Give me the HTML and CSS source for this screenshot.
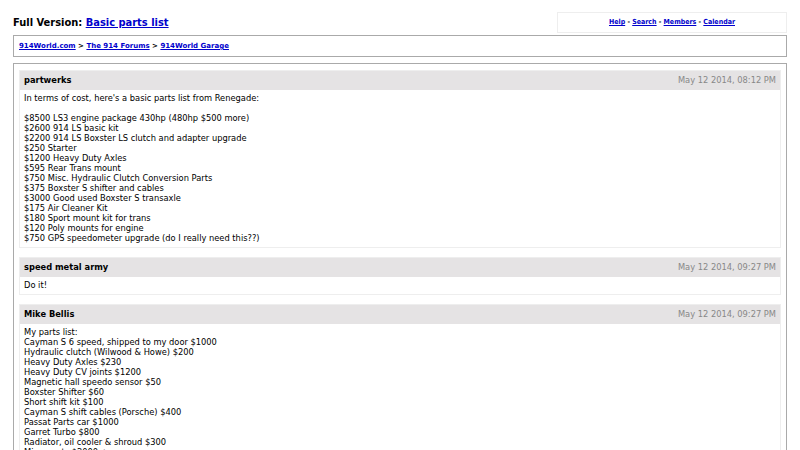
FILE: index.html
```html
<!DOCTYPE html>
<html lang="en">
<head>
    <meta charset="UTF-8">
    <title>Basic parts list - 914World Garage</title>
    <link rel="stylesheet" href="styles.css">
</head>
<body>
    <div class="top">
        <h1 class="title">Full Version: <a href="#">Basic parts list</a></h1>
        <div class="menu">
            <a href="#">Help</a> - <a href="#">Search</a> - <a href="#">Members</a> - <a href="#">Calendar</a>
        </div>
    </div>

    <div class="crumbs">
        <a href="#">914World.com</a> &gt; <a href="#">The 914 Forums</a> &gt; <a href="#">914World Garage</a>
    </div>

    <div class="thread">
        <div class="post">
            <div class="post-head">
                <span class="author">partwerks</span>
                <span class="date">May 12 2014, 08:12 PM</span>
            </div>
            <div class="post-body">In terms of cost, here's a basic parts list from Renegade:<br>
<br>
$8500 LS3 engine package 430hp (480hp $500 more)<br>
$2600 914 LS basic kit<br>
$2200 914 LS Boxster LS clutch and adapter upgrade<br>
$250 Starter<br>
$1200 Heavy Duty Axles<br>
$595 Rear Trans mount<br>
$750 Misc. Hydraulic Clutch Conversion Parts<br>
$375 Boxster S shifter and cables<br>
$3000 Good used Boxster S transaxle<br>
$175 Air Cleaner Kit<br>
$180 Sport mount kit for trans<br>
$120 Poly mounts for engine<br>
$750 GPS speedometer upgrade (do I really need this??)</div>
        </div>

        <div class="post">
            <div class="post-head">
                <span class="author">speed metal army</span>
                <span class="date">May 12 2014, 09:27 PM</span>
            </div>
            <div class="post-body">Do it!</div>
        </div>

        <div class="post">
            <div class="post-head">
                <span class="author">Mike Bellis</span>
                <span class="date">May 12 2014, 09:27 PM</span>
            </div>
            <div class="post-body">My parts list:<br>
Cayman S 6 speed, shipped to my door $1000<br>
Hydraulic clutch (Wilwood &amp; Howe) $200<br>
Heavy Duty Axles $230<br>
Heavy Duty CV joints $1200<br>
Magnetic hall speedo sensor $50<br>
Boxster Shifter $60<br>
Short shift kit $100<br>
Cayman S shift cables (Porsche) $400<br>
Passat Parts car $1000<br>
Garret Turbo $800<br>
Radiator, oil cooler &amp; shroud $300<br>
Misc. parts $2000 +</div>
        </div>
    </div>
</body>
</html>
```

FILE: styles.css
```css
body {
    margin: 0;
    padding: 12px 13px;
    font-family: "DejaVu Sans", Verdana, sans-serif;
    color: #000;
    background: #fff;
}

a {
    color: #0000cc;
}

.top {
    display: flex;
    justify-content: space-between;
    align-items: center;
}

.title {
    margin: 0;
    font-family: "DejaVu Sans Condensed", "DejaVu Sans", sans-serif;
    font-size: 11px;
    font-weight: bold;
}

.menu {
    width: 228px;
    height: 19px;
    line-height: 19px;
    border: 1px solid #eee;
    text-align: center;
    font-family: "DejaVu Sans Condensed", "DejaVu Sans", sans-serif;
    font-size: 7px;
    font-weight: bold;
}

.crumbs {
    margin-top: 2px;
    height: 20px;
    line-height: 20px;
    padding: 0 5px;
    border: 1px solid #aaa;
    font-size: 7px;
    font-weight: bold;
}

.thread {
    margin-top: 6px;
    padding: 6px 5px 5px;
    border: 1px solid #aaa;
    min-height: 400px;
}

.post {
    border: 1px solid #eee;
    margin-bottom: 9px;
}

.post-head {
    display: flex;
    justify-content: space-between;
    height: 19px;
    line-height: 19px;
    padding: 0 4px;
    background-color: #e5e3e4;
    font-size: 8.3px;
}

.author {
    font-weight: bold;
}

.date {
    color: #888;
}

.post-body {
    padding: 3px 4px 4px;
    font-size: 8.3px;
    line-height: 10px;
}
```
